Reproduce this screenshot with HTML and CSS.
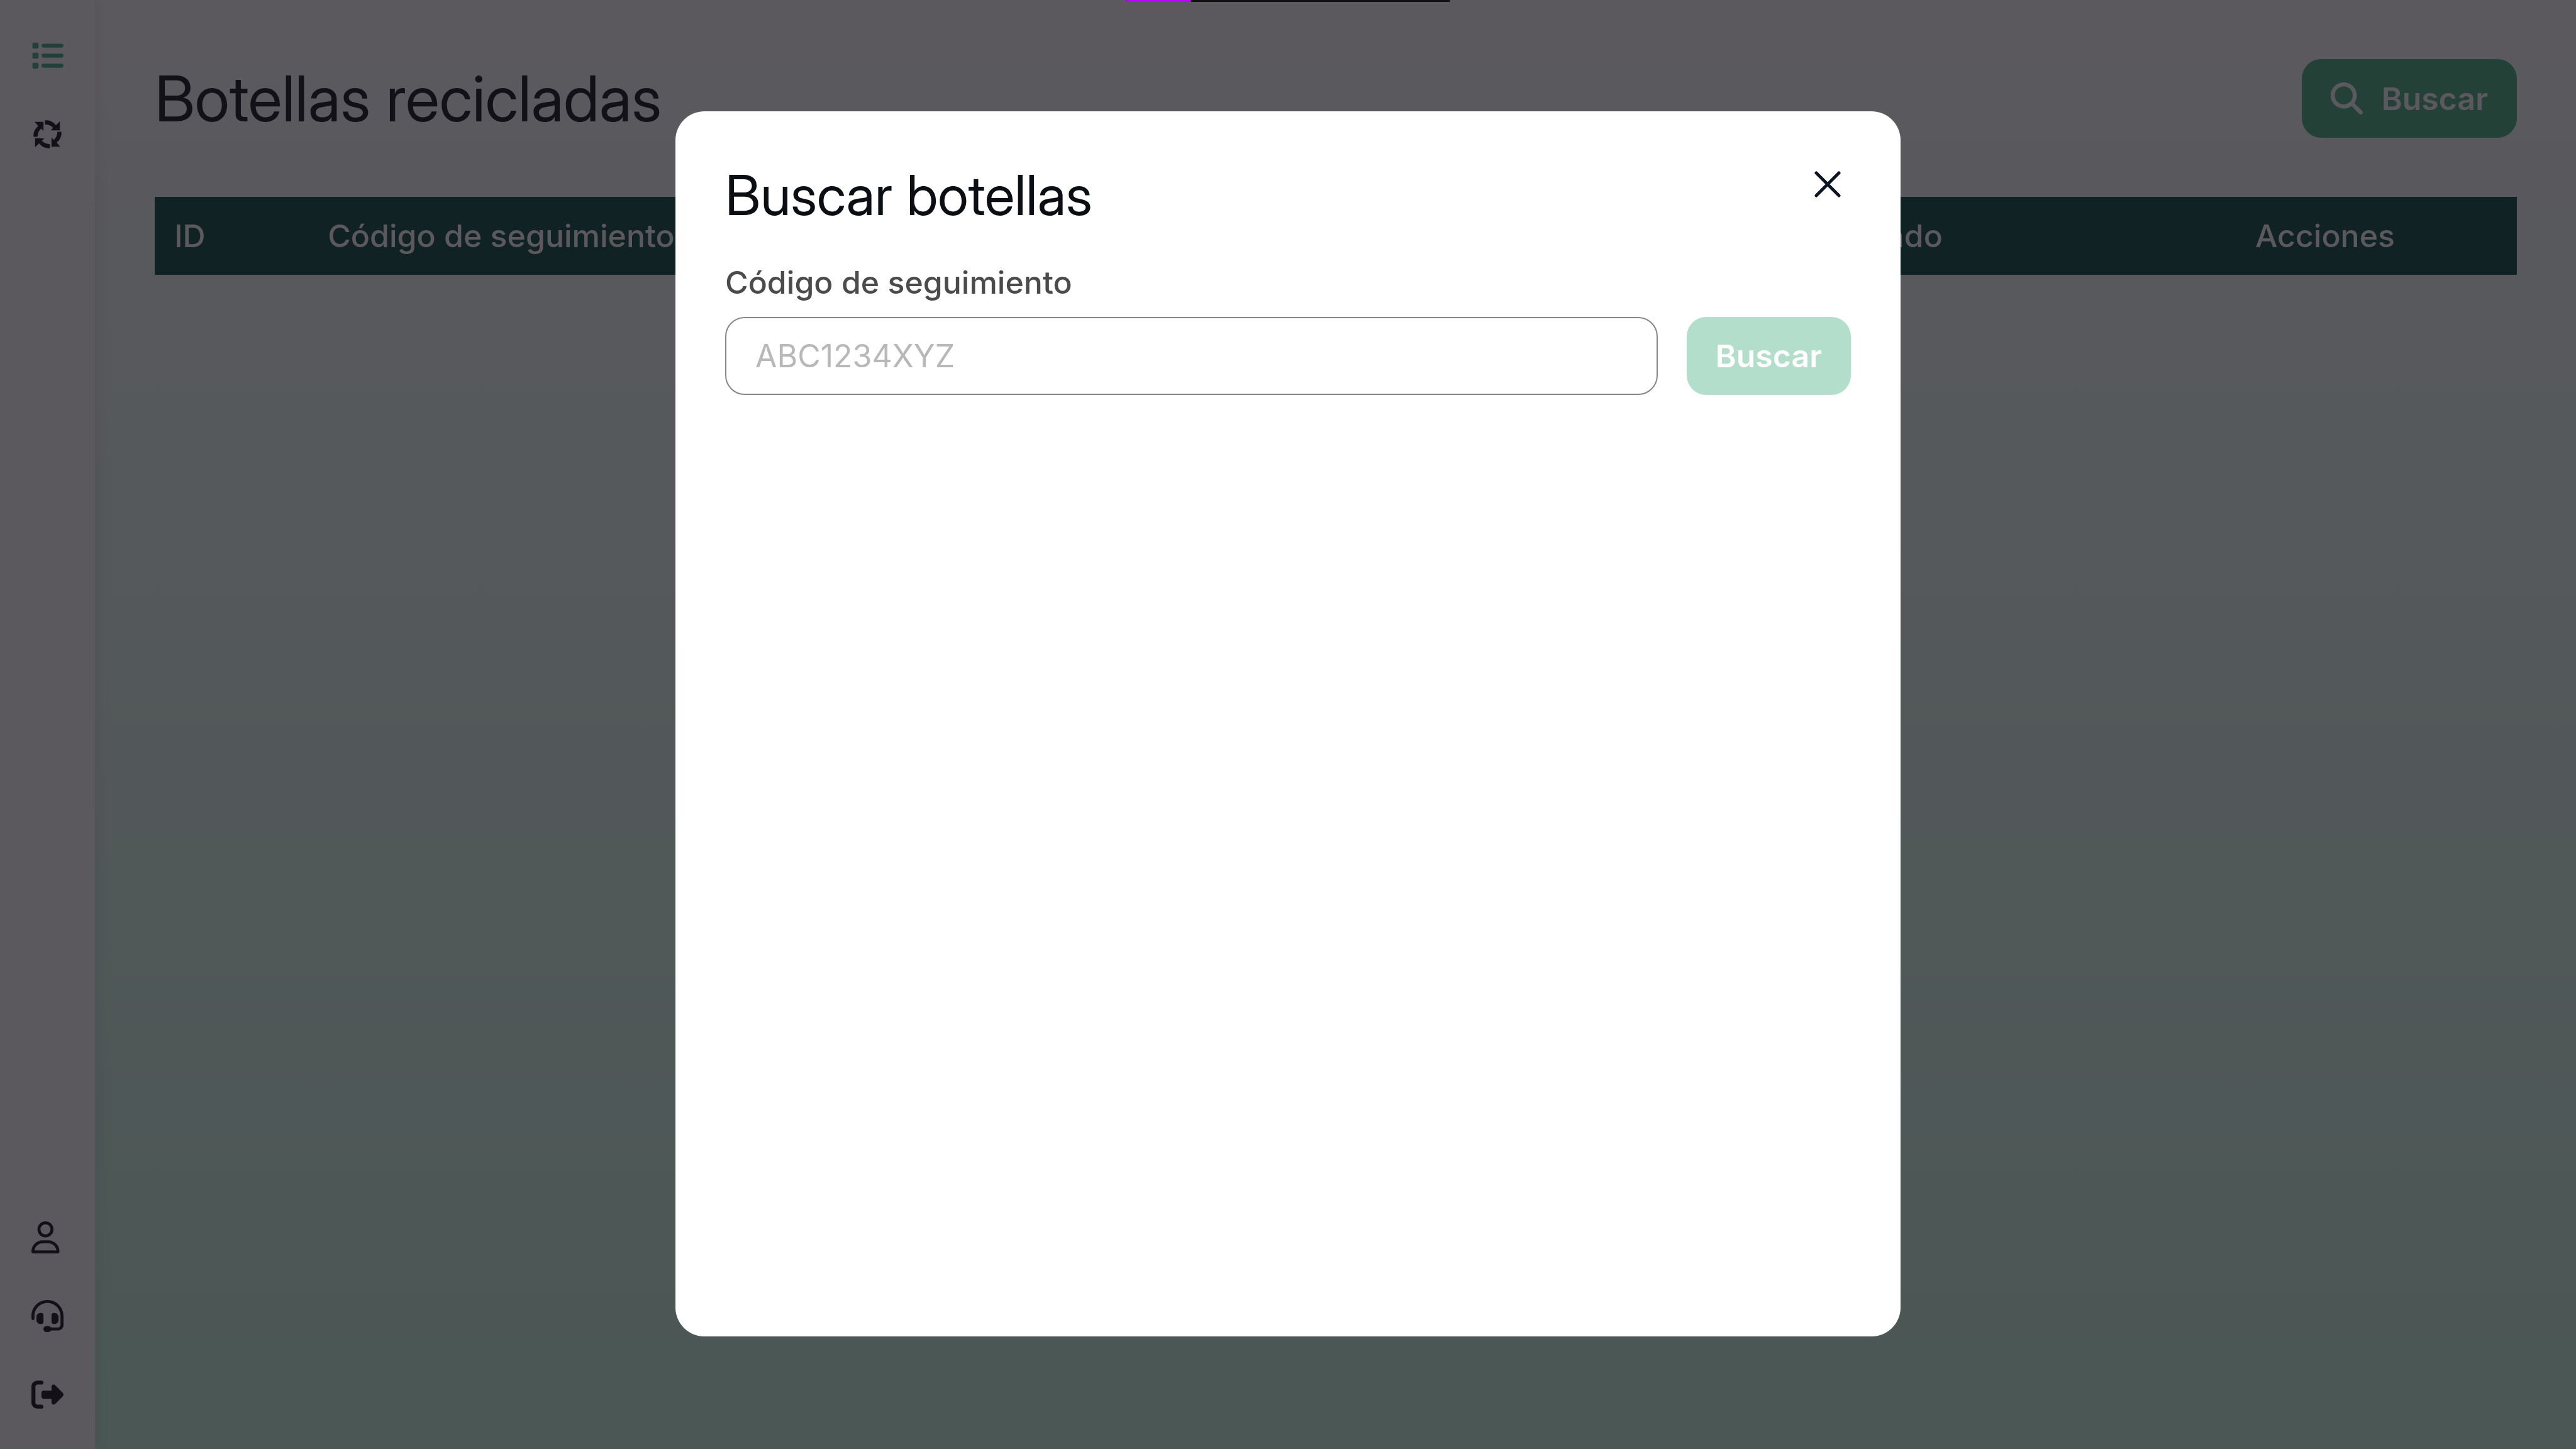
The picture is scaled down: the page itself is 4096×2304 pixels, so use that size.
FILE: index.html
```html
<!DOCTYPE html>
<html lang="es">
<head>
<meta charset="utf-8">
<title>Botellas recicladas</title>
<link rel="stylesheet" href="styles.css">
</head>
<body>
<div class="app">
  <nav class="sidebar" aria-label="Principal">
    <div class="nav-group">
      <a class="nav-link active" href="#botellas" aria-label="Botellas">
        <svg class="icon" viewBox="0 0 512 512"><path d="M40 48C26.700 48 16 58.700 16 72v48c0 13.300 10.700 24 24 24h48c13.300 0 24-10.700 24-24V72c0-13.300-10.700-24-24-24H40zM192 64c-17.700 0-32 14.300-32 32s14.300 32 32 32h288c17.700 0 32-14.300 32-32s-14.300-32-32-32H192zm0 160c-17.700 0-32 14.300-32 32s14.300 32 32 32h288c17.700 0 32-14.300 32-32s-14.300-32-32-32H192zm0 160c-17.700 0-32 14.300-32 32s14.300 32 32 32h288c17.700 0 32-14.300 32-32s-14.300-32-32-32H192zM16 232v48c0 13.300 10.700 24 24 24h48c13.300 0 24-10.700 24-24v-48c0-13.300-10.700-24-24-24H40c-13.300 0-24 10.700-24 24zM40 368c-13.300 0-24 10.700-24 24v48c0 13.300 10.700 24 24 24h48c13.300 0 24-10.700 24-24v-48c0-13.300-10.700-24-24-24H40z"/></svg>
      </a>
      <a class="nav-link" href="#reciclaje" aria-label="Reciclaje">
        <svg class="icon" viewBox="0 0 512 512">
          <g id="arrow"><path d="M216 34C286 28 344 54 390 110L454 50V192H308L346 154C314 120 274 100 216 98Z"/></g>
          <use href="#arrow" transform="rotate(90 256 256)"/>
          <use href="#arrow" transform="rotate(180 256 256)"/>
          <use href="#arrow" transform="rotate(270 256 256)"/>
        </svg>
      </a>
    </div>
    <div class="nav-group">
      <a class="nav-link" href="#perfil" aria-label="Perfil">
        <svg class="icon" viewBox="0 0 512 512"><path d="M304 128a80 80 0 1 0 -160 0 80 80 0 1 0 160 0zM96 128a128 128 0 1 1 256 0A128 128 0 1 1 96 128zM49.300 464H398.700c-8.900-63.300-63.300-112-129-112H178.300c-65.700 0-120.100 48.700-129 112zM0 482.300C0 383.800 79.800 304 178.300 304h91.400C368.200 304 448 383.800 448 482.300c0 16.400-13.300 29.700-29.700 29.700H29.700C13.300 512 0 498.700 0 482.300z"/></svg>
      </a>
      <a class="nav-link" href="#soporte" aria-label="Soporte">
        <svg class="icon" viewBox="0 0 512 512"><path d="M256 48C141.100 48 48 141.100 48 256v40c0 13.300-10.700 24-24 24s-24-10.700-24-24V256C0 114.600 114.600 0 256 0S512 114.600 512 256V400.100c0 48.600-39.400 88-88.100 88L313.600 488c-8.300 14.300-23.800 24-41.600 24H240c-26.500 0-48-21.500-48-48s21.500-48 48-48h32c17.800 0 33.300 9.700 41.600 24l110.400 .1c22.100 0 40-17.900 40-40V256c0-114.900-93.100-208-208-208zM144 208h16c17.700 0 32 14.300 32 32V352c0 17.700-14.300 32-32 32H144c-35.300 0-64-28.700-64-64V272c0-35.300 28.700-64 64-64zm224 0c35.300 0 64 28.700 64 64v48c0 35.300-28.700 64-64 64H352c-17.700 0-32-14.300-32-32V240c0-17.700 14.300-32 32-32h16z"/></svg>
      </a>
      <a class="nav-link" href="#salir" aria-label="Salir">
        <svg class="icon" viewBox="0 0 512 512"><path d="M377.900 105.900L500.700 228.700c7.200 7.200 11.300 17.100 11.300 27.300s-4.100 20.100-11.300 27.300L377.900 406.100c-6.400 6.400-15 9.900-24 9.900c-18.700 0-33.900-15.200-33.900-33.900l0-62.100-128 0c-17.700 0-32-14.300-32-32l0-64c0-17.700 14.300-32 32-32l128 0 0-62.100c0-18.700 15.200-33.900 33.900-33.900c9 0 17.600 3.600 24 9.900zM160 96L96 96c-17.700 0-32 14.300-32 32l0 256c0 17.700 14.300 32 32 32l64 0c17.700 0 32 14.300 32 32s-14.300 32-32 32l-64 0c-53 0-96-43-96-96L0 128C0 75 43 32 96 32l64 0c17.700 0 32 14.300 32 32s-14.300 32-32 32z"/></svg>
      </a>
    </div>
  </nav>
  <main class="content">
    <header class="page-header">
      <h1 class="page-title">Botellas recicladas</h1>
      <button class="button" type="button">
        <svg class="icon" viewBox="0 0 512 512"><path d="M416 208c0 45.900-14.900 88.300-40 122.700L502.600 457.400c12.500 12.500 12.500 32.800 0 45.300s-32.800 12.500-45.300 0L330.700 376c-34.400 25.200-76.800 40-122.700 40C93.100 416 0 322.900 0 208S93.100 0 208 0S416 93.100 416 208zM208 352a144 144 0 1 0 0-288 144 144 0 1 0 0 288z"/></svg>
        Buscar
      </button>
    </header>
    <table class="bottles">
      <colgroup><col class="col-id"><col class="col-code"><col class="col-state"><col class="col-actions"></colgroup>
      <thead>
        <tr><th scope="col">ID</th><th scope="col">Código de seguimiento</th><th scope="col">Estado</th><th scope="col">Acciones</th></tr>
      </thead>
    </table>
  </main>
</div>
<div class="overlay">
  <section class="modal" role="dialog" aria-modal="true" aria-labelledby="modal-title">
    <header class="modal-header">
      <h2 class="modal-title" id="modal-title">Buscar botellas</h2>
      <button class="close" type="button" aria-label="Cerrar">
        <svg class="close-icon" viewBox="0 0 42 42"><path d="M3 3L39 39M39 3L3 39"/></svg>
      </button>
    </header>
    <form class="search-form">
      <div class="field">
        <label class="label" for="codigo">Código de seguimiento</label>
        <input class="input" id="codigo" type="text" placeholder="ABC1234XYZ">
      </div>
      <button class="button" type="submit" disabled>Buscar</button>
    </form>
  </section>
</div>
<div class="progress" role="progressbar" aria-label="Carga" aria-valuenow="20" aria-valuemin="0" aria-valuemax="100">
  <div class="progress-value" style="width: 20%"></div>
</div>
</body>
</html>
```
FILE: styles.css
```css
* {
  box-sizing: border-box;
}

body {
  margin: 0;
  color: #0b0f13;
  font-family: Inter, "Liberation Sans", sans-serif;
  font-size: 50px;
  line-height: 62px;
}

h1,
h2 {
  margin: 0;
  font-family: "Inter Display", Inter, sans-serif;
  font-weight: 400;
}

button,
input {
  font: inherit;
}

.app {
  display: flex;
  min-height: 100vh;
  background: linear-gradient(#ffffff, #c6f8df);
}

.sidebar {
  display: flex;
  flex-direction: column;
  justify-content: space-between;
  flex: none;
  padding: 63px 50px 61px;
  background: #ffffff;
  box-shadow: 0 0 26px rgba(0, 0, 0, 0.1);
}

.nav-group {
  display: flex;
  flex-direction: column;
  gap: 74px;
}

.nav-link {
  display: block;
  height: 51px;
  color: inherit;
}

.nav-link.active {
  color: #47af81;
}

.icon {
  display: block;
  flex: none;
  width: 51px;
  height: 51px;
  fill: currentColor;
}

.content {
  flex: 1;
  padding: 94px 94px 94px 95px;
}

.page-header {
  display: flex;
  align-items: center;
  justify-content: space-between;
  margin-bottom: 94px;
}

.page-title {
  font-size: 100px;
  line-height: 125px;
}

.button {
  display: flex;
  align-items: center;
  gap: 30px;
  height: 125px;
  padding: 0 46px;
  border: 0;
  border-radius: 31px;
  background: #47af81;
  color: #ffffff;
  font-weight: 600;
}

.button:disabled {
  opacity: 0.4;
}

.bottles {
  width: 100%;
  table-layout: fixed;
  border-collapse: collapse;
  background: #04473b;
  color: #ffffff;
}

.bottles th {
  padding: 31px;
  font-weight: 500;
  text-align: left;
}

.col-id {
  width: 6.5%;
}

.col-state {
  width: 17.6%;
}

.col-actions {
  width: 11.9%;
}

.overlay {
  position: fixed;
  inset: 0;
  padding: 177px 0;
  background: rgba(21, 18, 26, 0.7);
}

.modal {
  width: 1948px;
  max-width: 90%;
  min-height: 1948px;
  margin: 0 auto;
  padding: 79px;
  border-radius: 46px;
  background: #ffffff;
}

.modal-header {
  display: flex;
  align-items: flex-start;
  justify-content: space-between;
  margin-bottom: 54px;
}

.modal-title {
  font-size: 88px;
  line-height: 108px;
}

.close {
  padding: 16px;
  border: 0;
  background: none;
}

.close-icon {
  display: block;
  width: 42px;
  height: 42px;
  fill: none;
  stroke: #0b1522;
  stroke-width: 5;
  stroke-linecap: round;
}

.search-form {
  display: flex;
  align-items: flex-end;
  gap: 46px;
}

.field {
  display: flex;
  flex: 1;
  flex-direction: column;
  gap: 24px;
}

.label {
  color: #4b4b4b;
  font-weight: 500;
}

.input {
  width: 100%;
  height: 124px;
  padding: 0 46px;
  border: 2px solid #868686;
  border-radius: 31px;
  background: #ffffff;
  color: inherit;
}

.search-form .button {
  height: 124px;
}

.input::placeholder {
  color: #b8b8b8;
  opacity: 1;
}

.progress {
  position: fixed;
  top: 0;
  left: 50%;
  width: 515px;
  height: 3px;
  background: #111111;
  transform: translateX(-50%);
}

.progress-value {
  height: 100%;
  background: #bf00ff;
}
```
